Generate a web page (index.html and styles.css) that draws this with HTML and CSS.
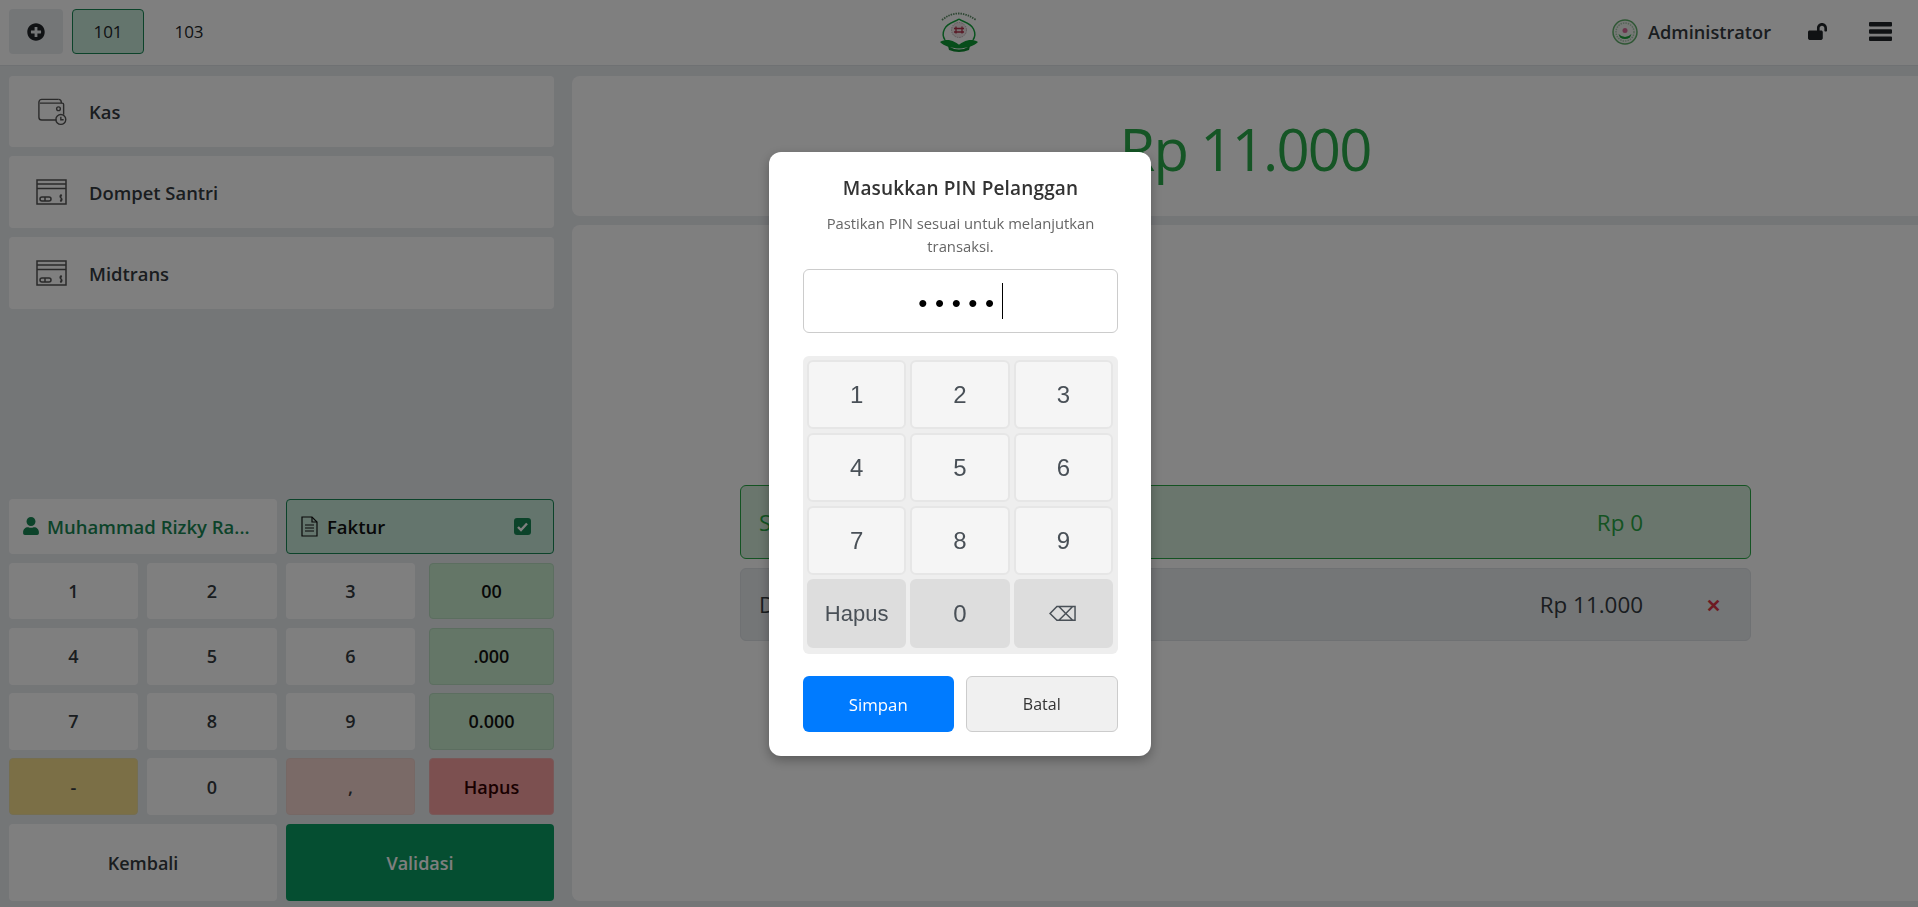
FILE: index.html
```html
<!DOCTYPE html>
<html lang="id">
<head>
  <meta charset="UTF-8" />
  <title>Kasir</title>
  <link rel="stylesheet" href="styles.css">
</head>
<body>
  <!-- Bar atas -->
  <header class="topbar">
    <div class="tabs">
      <button class="tab-add">
        <svg class="ico-plus" viewBox="0 0 512 512"><path d="M256 8C119 8 8 119 8 256s111 248 248 248 248-111 248-248S393 8 256 8zm144 276c0 6.600-5.400 12-12 12h-92v92c0 6.600-5.400 12-12 12h-56c-6.600 0-12-5.400-12-12v-92h-92c-6.600 0-12-5.400-12-12v-56c0-6.600 5.400-12 12-12h92v-92c0-6.600 5.400-12 12-12h56c6.600 0 12 5.400 12 12v92h92c6.600 0 12 5.400 12 12v56z"/></svg>
      </button>
      <button class="tab tab-active">101</button>
      <button class="tab">103</button>
    </div>
    <svg class="logo" viewBox="0 0 38 40">
      <path d="M2 8 Q18 -5 36 8" fill="none" stroke="#5f8f68" stroke-width="1.800" stroke-dasharray="1.500 1"/>
      <path d="M19 7 C16 10 8 10 4.500 17 C2.500 21 3 25 5 28" fill="none" stroke="#12a53c" stroke-width="1.500"/>
      <path d="M19 7 C22 10 30 10 33.500 17 C35.500 21 35 25 33 28" fill="none" stroke="#12a53c" stroke-width="1.500"/>
      <circle cx="19" cy="18" r="7.500" fill="#f1e6e8" stroke="#bcaeb3" stroke-width="1" stroke-dasharray="1.500 1"/>
      <path d="M14 16.500h10M14 20h10M16 14.500v7M22 14.500v7" stroke="#b0304a" stroke-width="1.300" fill="none"/>
      <path d="M0 30 C7 26 14 28 23 36 C14 37 5 35 0 30z" fill="#0f9a34"/>
      <path d="M38 30 C31 26 24 28 15 36 C24 37 33 35 38 30z" fill="#0f9a34"/>
      <path d="M8 34 Q19 41 30 34 L29 38 Q19 42 9 38z" fill="#0c8a2e"/>
    </svg>
    <div class="top-right">
      <svg class="avatar" viewBox="0 0 26 26">
        <circle cx="13" cy="13" r="12" fill="#eef3ee" stroke="#5fae6a" stroke-width="1.500"/>
        <circle cx="13" cy="13" r="9" fill="none" stroke="#a9c9ad" stroke-width="1.500" stroke-dasharray="1.500 1"/>
        <circle cx="13" cy="11.500" r="2.500" fill="#d86a9a"/>
        <path d="M6.500 15 Q13 21 19.500 15 L18 18.500 Q13 21.500 8 18.500z" fill="#1fa33c"/>
      </svg>
      <span class="user-name">Administrator</span>
      <svg class="ico-lock" viewBox="0 0 576 512"><path d="M423.500 0C339.500.300 272 69.500 272 153.500V224H48c-26.500 0-48 21.500-48 48v192c0 26.500 21.500 48 48 48h352c26.500 0 48-21.500 48-48V272c0-26.500-21.500-48-48-48h-48v-71.100c0-39.600 31.700-72.500 71.300-72.900 40-.4 72.700 32.100 72.700 72v80c0 13.300 10.700 24 24 24h32c13.300 0 24-10.700 24-24v-80C576 68 507.500-.3 423.500 0z"/></svg>
      <svg class="ico-bars" viewBox="0 0 23 19"><path d="M1 0h21a1 1 0 0 1 1 1v2.500a1 1 0 0 1-1 1H1a1 1 0 0 1-1-1V1a1 1 0 0 1 1-1zM1 7.250h21a1 1 0 0 1 1 1v2.500a1 1 0 0 1-1 1H1a1 1 0 0 1-1-1v-2.500a1 1 0 0 1 1-1zM1 14.500h21a1 1 0 0 1 1 1V18a1 1 0 0 1-1 1H1a1 1 0 0 1-1-1v-2.500a1 1 0 0 1 1-1z"/></svg>
    </div>
  </header>

  <main class="layout">
    <!-- Kolom kiri -->
    <section class="left">
      <div class="methods">
        <button class="method">
          <svg class="ico-method" viewBox="0 0 31 30" fill="none" stroke="#555" stroke-width="1.500">
            <path d="M23 1.500H5a3 3 0 0 0-3 3v16a3 3 0 0 0 3 3h16"/>
            <path d="M3 5.500h24a1.500 1.500 0 0 1 1.500 1.500v11"/>
            <path d="M23 1.500a3 3 0 0 1 3 3v1"/>
            <circle cx="23" cy="11.500" r="2"/>
            <circle cx="25.500" cy="23" r="5.300"/>
            <path d="M25.500 20v3.300h3"/>
          </svg>
          <span>Kas</span>
        </button>
        <button class="method">
          <svg class="ico-method" viewBox="0 0 31 26" fill="none" stroke="#555" stroke-width="1.500">
            <rect x="1" y="1" width="29" height="24"/>
            <path d="M1 5h29M1 9.500h29"/>
            <rect x="4" y="18" width="11" height="4" rx="2"/>
            <path d="M9 18v4"/>
            <path d="M26 16.500c-2-1-3 1.500-1 2.500s1 3.500-1 2.500M25 15v8" stroke-width="1.100"/>
          </svg>
          <span>Dompet Santri</span>
        </button>
        <button class="method">
          <svg class="ico-method" viewBox="0 0 31 26" fill="none" stroke="#555" stroke-width="1.500">
            <rect x="1" y="1" width="29" height="24"/>
            <path d="M1 5h29M1 9.500h29"/>
            <rect x="4" y="18" width="11" height="4" rx="2"/>
            <path d="M9 18v4"/>
            <path d="M26 16.500c-2-1-3 1.500-1 2.500s1 3.500-1 2.500M25 15v8" stroke-width="1.100"/>
          </svg>
          <span>Midtrans</span>
        </button>
      </div>

      <div class="pad">
        <div class="pad-head">
          <button class="customer">
            <svg class="ico-user" viewBox="0 0 448 512"><path d="M224 256c70.700 0 128-57.300 128-128S294.700 0 224 0 96 57.300 96 128s57.300 128 128 128zm89.600 32h-16.700c-22.200 10.200-46.900 16-72.900 16s-50.600-5.800-72.900-16h-16.700C60.200 288 0 348.200 0 422.400V464c0 26.500 21.500 48 48 48h352c26.500 0 48-21.500 48-48v-41.600c0-74.200-60.200-134.400-134.400-134.400z"/></svg>
            <span class="customer-name">Muhammad Rizky Ra...</span>
          </button>
          <button class="invoice">
            <svg class="ico-file" viewBox="0 0 17 21" fill="none" stroke="#111" stroke-width="1.200">
              <path d="M1 1h10l5 5v14H1z"/>
              <path d="M11 1v5h5"/>
              <path d="M4 9h9M4 12h9M4 15h9" stroke-width="1"/>
            </svg>
            <span>Faktur</span>
            <svg class="ico-check" viewBox="0 0 17 17"><rect width="17" height="17" rx="3" fill="#198754"/><path d="M4 9l3 3 6-6.500" fill="none" stroke="#fff" stroke-width="2.400"/></svg>
          </button>
        </div>
        <div class="pad-grid">
          <button class="key">1</button>
          <button class="key">2</button>
          <button class="key">3</button>
          <button class="key key-green">00</button>
          <button class="key">4</button>
          <button class="key">5</button>
          <button class="key">6</button>
          <button class="key key-green">.000</button>
          <button class="key">7</button>
          <button class="key">8</button>
          <button class="key">9</button>
          <button class="key key-green">0.000</button>
          <button class="key key-yellow">-</button>
          <button class="key">0</button>
          <button class="key key-pink">,</button>
          <button class="key key-red">Hapus</button>
        </div>
        <div class="pad-foot">
          <button class="btn-back">Kembali</button>
          <button class="btn-validate">Validasi</button>
        </div>
      </div>
    </section>

    <!-- Kolom kanan -->
    <section class="right">
      <div class="total">Rp 11.000</div>
      <div class="payments">
        <div class="pay-row pay-rest">
          <span class="pay-label">Sisa</span>
          <span class="pay-amount">Rp 0</span>
        </div>
        <div class="pay-row pay-line">
          <span class="pay-label">Dompet Santri</span>
          <span class="pay-amount">Rp 11.000</span>
          <span class="pay-del">&#10005;</span>
        </div>
      </div>
    </section>
  </main>

  <!-- Modal PIN -->
  <div class="overlay">
    <div class="modal">
      <h2 class="modal-title">Masukkan PIN Pelanggan</h2>
      <p class="modal-sub">Pastikan PIN sesuai untuk melanjutkan transaksi.</p>
      <div class="pin-input"><span class="pin-dots">&bull;&bull;&bull;&bull;&bull;</span><span class="pin-caret"></span></div>
      <div class="pin-keys">
        <button class="pin-key">1</button>
        <button class="pin-key">2</button>
        <button class="pin-key">3</button>
        <button class="pin-key">4</button>
        <button class="pin-key">5</button>
        <button class="pin-key">6</button>
        <button class="pin-key">7</button>
        <button class="pin-key">8</button>
        <button class="pin-key">9</button>
        <button class="pin-key pin-key-dark pin-key-word">Hapus</button>
        <button class="pin-key pin-key-dark">0</button>
        <button class="pin-key pin-key-dark pin-key-back">&#9003;</button>
      </div>
      <div class="modal-actions">
        <button class="btn-save">Simpan</button>
        <button class="btn-cancel">Batal</button>
      </div>
    </div>
  </div>
</body>
</html>
```

FILE: styles.css
```css
* {
  box-sizing: border-box;
}
html, body {
  margin: 0;
  height: 100%;
}
body {
  display: flex;
  flex-direction: column;
  background: #e9ecef;
  color: #343a40;
  font-family: "Open Sans", "Noto Sans", sans-serif;
  overflow: hidden;
}
button {
  font-family: inherit;
  border: none;
  color: inherit;
  cursor: pointer;
}

/* bar atas */
.topbar {
  flex: none;
  height: 66px;
  display: flex;
  align-items: center;
  padding: 0 26px 2px 9px;
  background: #fff;
  border-bottom: 1px solid #dee2e6;
}
.tabs {
  flex: 1;
  display: flex;
  align-items: center;
  gap: 9px;
}
.tab-add {
  width: 54px;
  height: 45px;
  display: flex;
  align-items: center;
  justify-content: center;
  background: #e9ecef;
  border-radius: 4px;
}
.ico-plus {
  width: 18px;
  height: 18px;
  fill: #212529;
}
.tab {
  width: 72px;
  height: 45px;
  padding: 0;
  background: none;
  border: 1px solid transparent;
  border-radius: 4px;
  font-size: 17px;
  color: #212529;
}
.tab-active {
  background: #c8eadb;
  border-color: #198754;
}
.logo {
  flex: none;
  width: 38px;
  height: 40px;
  margin-left: 17px;
}
.top-right {
  flex: 1;
  display: flex;
  align-items: center;
  justify-content: flex-end;
}
.avatar {
  width: 26px;
  height: 26px;
}
.user-name {
  margin-left: 10px;
  font-size: 18.200px;
  font-weight: 600;
}
.ico-lock {
  width: 19px;
  height: 17px;
  margin-left: 37px;
  fill: #212529;
}
.ico-bars {
  width: 23px;
  height: 19px;
  margin-left: 42px;
  fill: #212529;
}

/* layout */
.layout {
  flex: 1;
  min-height: 0;
  display: flex;
  gap: 18px;
  padding: 10px 0 6px 9px;
}
.left {
  width: 545px;
  display: flex;
  flex-direction: column;
  justify-content: space-between;
}
.right {
  flex: 1;
  display: flex;
  flex-direction: column;
  gap: 9px;
}

/* metode bayar */
.methods {
  display: flex;
  flex-direction: column;
  gap: 9px;
}
.method {
  height: 72px;
  display: flex;
  align-items: center;
  padding: 0 0 0 27px;
  background: #fff;
  border-radius: 4px;
  font-size: 18.400px;
  font-weight: 600;
}
.method:first-child {
  height: 71px;
}
.ico-method {
  width: 31px;
  height: 28px;
  margin-right: 22px;
}

/* numpad kiri */
.pad-head {
  display: flex;
  gap: 9px;
  margin-bottom: 9px;
}
.customer, .invoice {
  width: 268px;
  height: 55px;
  display: flex;
  align-items: center;
  border-radius: 4px;
  font-size: 18.500px;
  font-weight: 600;
}
.customer {
  padding: 0 14px;
  background: #fff;
  color: #198754;
}
.ico-user {
  flex: none;
  width: 16px;
  height: 18px;
  margin-right: 8px;
  fill: #198754;
}
.customer-name {
  white-space: nowrap;
}
.invoice {
  padding: 0 22px 0 14px;
  background: #c8eadb;
  border: 1px solid #198754;
  color: #111;
}
.ico-file {
  width: 17px;
  height: 21px;
  margin-right: 9px;
}
.ico-check {
  width: 17px;
  height: 17px;
  margin-left: auto;
}
.pad-grid {
  display: grid;
  grid-template-columns: 129px 130px 129px 130px;
  grid-auto-rows: 56.750px;
  column-gap: 9px;
  row-gap: 8.500px;
}
.key {
  padding: 0;
  background: #fff;
  border-radius: 4px;
  font-size: 18px;
  font-weight: 600;
}
.pad-grid .key:nth-child(4n) {
  margin-left: 5px;
  color: #111;
}
.key-green {
  background: #c8ecce;
  border: 1px solid #b8dcc0;
}
.key-yellow {
  background: #f7df8c;
  border: 1px solid #eadca0;
}
.key-pink {
  background: #f5d5cf;
  border: 1px solid #ecd0cb;
}
.key-red {
  background: #f8a0a0;
  border: 1px solid #f2b0b0;
  color: #300 !important;
}
.pad-foot {
  display: flex;
  gap: 9px;
  margin-top: 9px;
}
.btn-back, .btn-validate {
  width: 268px;
  height: 77px;
  border-radius: 4px;
  font-size: 18px;
  font-weight: 600;
}
.btn-back {
  background: #fff;
}
.btn-validate {
  background: #0b9c62;
  color: #fff;
}

/* kanan */
.total {
  height: 140px;
  padding-top: 4px;
  display: flex;
  align-items: center;
  justify-content: center;
  background: #fff;
  border-radius: 8px 0 0 8px;
  font-size: 58px;
  letter-spacing: -1.800px;
  color: #2aab4b;
}
.payments {
  flex: 1;
  display: flex;
  flex-direction: column;
  gap: 9px;
  padding: 260px 167px 0 168px;
  background: #fff;
  border-radius: 8px 0 0 8px;
}
.pay-row {
  height: 74px;
  display: flex;
  align-items: center;
  padding: 0 0 0 18px;
  border-radius: 6px;
  font-size: 22.400px;
  border: 1px solid #dee2e6;
}
.pay-rest {
  background: #d4edda;
  border-color: #28a745;
  color: #28a745;
}
.pay-line {
  height: 73px;
  background: #e9ecef;
}
.pay-amount {
  margin-left: auto;
  margin-right: 107px;
}
.pay-line .pay-amount {
  margin-right: 0;
}
.pay-del {
  width: 107px;
  padding-left: 63px;
  font-size: 18px;
  font-weight: 700;
  color: #dc3545;
}

/* modal PIN */
.overlay {
  position: fixed;
  inset: 0;
  background: rgba(0, 0, 0, 0.5);
  display: flex;
  justify-content: center;
  align-items: flex-start;
  padding: 152px 0 0 2px;
}
.modal {
  width: 382px;
  height: 604px;
  padding: 24px 33px 0 34px;
  background: #fff;
  border-radius: 12px;
  box-shadow: 0 4px 12px rgba(0, 0, 0, 0.3);
  text-align: center;
}
.modal-title {
  margin: 0;
  font-size: 19px;
  font-weight: 600;
  letter-spacing: 0.150px;
  line-height: 24px;
  color: #333;
}
.modal-sub {
  margin: 12px 0 0;
  font-size: 14.800px;
  line-height: 23px;
  color: #666;
}
.pin-input {
  height: 64px;
  margin-top: 11px;
  display: flex;
  align-items: center;
  justify-content: center;
  border: 1px solid #ccc;
  border-radius: 6px;
}
.pin-dots {
  padding-top: 4px;
  font-family: "Liberation Sans", sans-serif;
  font-size: 26px;
  letter-spacing: 7.570px;
  color: #000;
}
.pin-caret {
  width: 1px;
  height: 36px;
  background: #000;
}
.pin-keys {
  margin-top: 23px;
  padding: 4px 5px 6px 4px;
  display: grid;
  grid-template-columns: repeat(3, 1fr);
  grid-auto-rows: 69px;
  gap: 4px;
  background: #eee;
  border-radius: 6px;
}
.pin-key {
  padding: 0;
  background: #f5f5f5;
  border: 2px solid #e6e6e6;
  border-radius: 6px;
  font-family: "Liberation Sans", sans-serif;
  font-size: 24px;
  color: #495057;
}
.pin-key-dark {
  background: #ddd;
  border-color: #ddd;
}
.pin-key-word {
  font-size: 22px;
}
.pin-key-back {
  font-size: 20px;
}
.modal-actions {
  display: flex;
  gap: 12px;
  margin-top: 22px;
}
.btn-save, .btn-cancel {
  flex: 1;
  height: 56px;
  border-radius: 6px;
  font-size: 16px;
}
.btn-save {
  background: #007bff;
  font-size: 16.800px;
  color: #fff;
}
.btn-cancel {
  background: #f0f0f0;
  border: 1px solid #ccc;
  color: #333;
}
```
